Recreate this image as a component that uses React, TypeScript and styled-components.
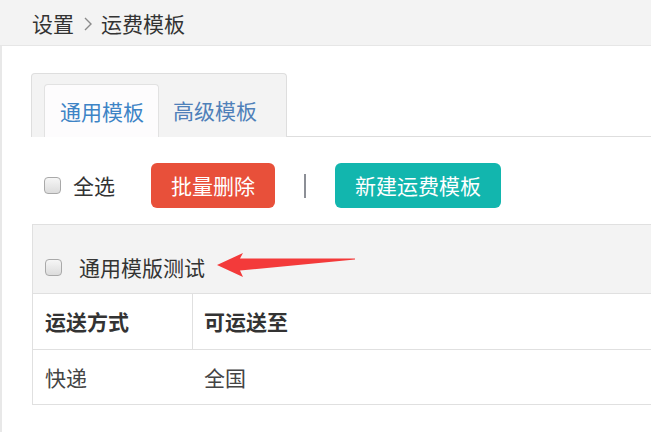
import React from "react";
import styled, { createGlobalStyle } from "styled-components";

const Global = createGlobalStyle`
  html, body { margin: 0; padding: 0; background: #fff; overflow: hidden; }
  body {
    font-family: "Noto Sans CJK SC", "Noto Sans", "Liberation Sans", sans-serif;
    color: #333;
  }
  * { box-sizing: border-box; }
`;

const Page = styled.div`
  width: 651px;
  height: 432px;
  display: flex;
  flex-direction: column;
  overflow: hidden;
`;

const Breadcrumb = styled.div`
  height: 46px;
  flex: none;
  background: #f3f3f3;
  border-bottom: 1px solid #e6e6e6;
  display: flex;
  align-items: center;
  padding: 2px 0 0 32px;
  font-size: 21px;
  line-height: 1;
  color: #333;
`;

const Crumb = styled.span``;

const Chevron = styled.svg`
  width: 8px;
  height: 14px;
  margin: 0 9px 0 10px;
`;

const Content = styled.div`
  flex: 1;
  border-left: 2px solid #e8e8e8;
  padding: 27px 0 0 29px;
  display: flex;
  flex-direction: column;
`;

const TabBar = styled.div`
  display: flex;
  border-bottom: 1px solid #dedede;
`;

const TabBox = styled.div`
  display: flex;
  align-items: flex-end;
  background: #f3f3f3;
  border: 1px solid #dedede;
  border-bottom: none;
  border-radius: 4px 4px 0 0;
  padding: 10px 15px 0 12px;
  margin-bottom: -1px;
`;

const Tab = styled.div<{ $active?: boolean }>`
  height: 53px;
  padding: ${(p) => (p.$active ? "0 14px 0 15px" : "0 14px")};
  display: flex;
  align-items: center;
  font-size: 21px;
  line-height: 1;
  color: ${(p) => (p.$active ? "#3d84c6" : "#4f80b9")};
  background: ${(p) => (p.$active ? "#fdfcfd" : "transparent")};
  border: ${(p) => (p.$active ? "1px solid #e2e2e2" : "none")};
  border-bottom: none;
  border-radius: 4px 4px 0 0;
`;

const Toolbar = styled.div`
  display: flex;
  align-items: center;
  height: 45px;
  margin-top: 26px;
  padding-left: 13px;
`;

const Check = styled.input.attrs({ type: "checkbox" })`
  appearance: none;
  -webkit-appearance: none;
  width: 17px;
  height: 17px;
  margin: 0;
  flex: none;
  border: 1px solid #a9a9a9;
  border-radius: 4px;
  background: linear-gradient(#f6f6f6, #dcdcdc);
`;

const Label = styled.span<{ $gap: number }>`
  margin-left: ${(p) => p.$gap}px;
  font-size: 21px;
  line-height: 1;
  color: #333;
`;

const Button = styled.button<{ $bg: string }>`
  height: 45px;
  padding: 0 20px;
  border: none;
  border-radius: 6px;
  background: ${(p) => p.$bg};
  color: #fff;
  font-family: inherit;
  font-size: 21px;
  line-height: 1;
`;

const Divider = styled.span`
  width: 2px;
  height: 24px;
  background: #8c8f96;
  margin: 0 29px 0 29px;
`;

const Card = styled.div`
  margin: 16px 0 0 1px;
  border: 1px solid #e0e0e0;
  border-right: none;
  border-bottom: none;
`;

const CardHeader = styled.div`
  height: 69px;
  background: #f3f3f3;
  display: flex;
  align-items: center;
  padding: 16px 12px 0;
  border-bottom: 1px solid #e0e0e0;
`;

const Arrow = styled.svg`
  width: 140px;
  height: 30px;
  margin: -4px 0 0 12px;
  flex: none;
`;

const Row = styled.div`
  display: grid;
  grid-template-columns: 159px 1fr;
  border-bottom: 1px solid #e0e0e0;
`;

const Cell = styled.div<{ $head?: boolean; $h: number; $divider?: boolean }>`
  height: ${(p) => p.$h}px;
  display: flex;
  align-items: center;
  padding-left: 11px;
  font-size: 21px;
  line-height: 1;
  font-weight: ${(p) => (p.$head ? 700 : 400)};
  color: ${(p) => (p.$head ? "#333" : "#444")};
  border-left: 1px solid ${(p) => (p.$divider ? "#e0e0e0" : "transparent")};
`;

export default function App() {
  return (
    <Page>
      <Global />
      <Breadcrumb>
        <Crumb>设置</Crumb>
        <Chevron viewBox="0 0 8 14">
          <polyline points="1,1 7,7 1,13" fill="none" stroke="#8a8a8a" strokeWidth="1.4" />
        </Chevron>
        <Crumb>运费模板</Crumb>
      </Breadcrumb>
      <Content>
        <TabBar>
          <TabBox>
            <Tab $active>通用模板</Tab>
            <Tab>高级模板</Tab>
          </TabBox>
        </TabBar>
        <Toolbar>
          <Check />
          <Label $gap={12}>全选</Label>
          <Button $bg="#e8503a" style={{ marginLeft: 36 }}>批量删除</Button>
          <Divider />
          <Button $bg="#12b6ae">新建运费模板</Button>
        </Toolbar>
        <Card>
          <CardHeader>
            <Check />
            <Label $gap={17}>通用模版测试</Label>
            <Arrow viewBox="0 0 140 30">
              <path d="M0 15 L26 3 L23 8.5 L138 8.5 L138 9.5 L23 20.5 L26 27 Z" fill="#f33a3a" />
            </Arrow>
          </CardHeader>
          <Row>
            <Cell $head $h={55}>运送方式</Cell>
            <Cell $head $h={55} $divider>可运送至</Cell>
          </Row>
          <Row>
            <Cell $h={54}>快递</Cell>
            <Cell $h={54}>全国</Cell>
          </Row>
        </Card>
      </Content>
    </Page>
  );
}
